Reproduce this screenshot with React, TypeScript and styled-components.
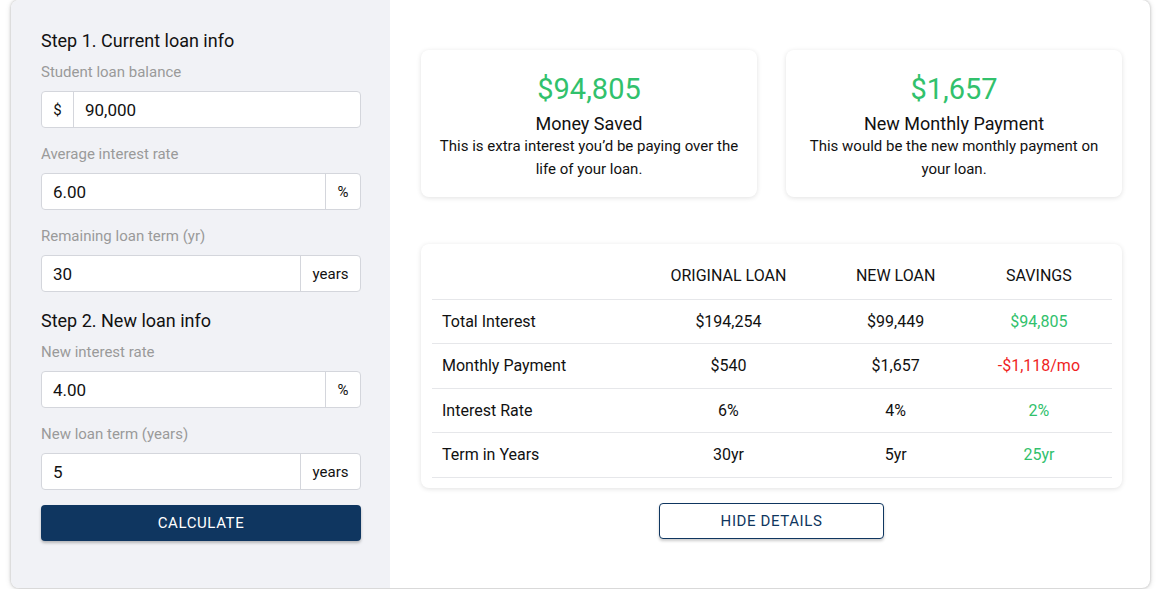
import styled, { createGlobalStyle } from "styled-components";

const GlobalStyle = createGlobalStyle`
  html, body {
    margin: 0;
    padding: 0;
    background: #ffffff;
    font-family: Roboto, "Liberation Sans", Arial, sans-serif;
    color: #111;
  }
  * { box-sizing: border-box; }
`;

type Field = { label: string; value: string; addon: string; addonSide: "left" | "right"; addonWidth: number };

const step1: Field[] = [
  { label: "Student loan balance", value: "90,000", addon: "$", addonSide: "left", addonWidth: 32 },
  { label: "Average interest rate", value: "6.00", addon: "%", addonSide: "right", addonWidth: 35 },
  { label: "Remaining loan term (yr)", value: "30", addon: "years", addonSide: "right", addonWidth: 60 },
];

const step2: Field[] = [
  { label: "New interest rate", value: "4.00", addon: "%", addonSide: "right", addonWidth: 35 },
  { label: "New loan term (years)", value: "5", addon: "years", addonSide: "right", addonWidth: 60 },
];

type Tone = "plain" | "good" | "bad";
const rows: { name: string; orig: string; next: string; diff: string; tone: Tone }[] = [
  { name: "Total Interest", orig: "$194,254", next: "$99,449", diff: "$94,805", tone: "good" },
  { name: "Monthly Payment", orig: "$540", next: "$1,657", diff: "-$1,118/mo", tone: "bad" },
  { name: "Interest Rate", orig: "6%", next: "4%", diff: "2%", tone: "good" },
  { name: "Term in Years", orig: "30yr", next: "5yr", diff: "25yr", tone: "good" },
];

function InputField({ field, first }: { field: Field; first: boolean }) {
  const addon = (
    <Addon $side={field.addonSide} $width={field.addonWidth}>
      {field.addon}
    </Addon>
  );
  return (
    <>
      <Label $first={first}>{field.label}</Label>
      <InputGroup>
        {field.addonSide === "left" && addon}
        <TextInput defaultValue={field.value} />
        {field.addonSide === "right" && addon}
      </InputGroup>
    </>
  );
}

export default function App() {
  return (
    <>
      <GlobalStyle />
      <Page>
        <Card>
          <Sidebar>
            <StepTitle>Step 1. Current loan info</StepTitle>
            {step1.map((f, i) => (
              <InputField key={f.label} field={f} first={i === 0} />
            ))}
            <StepTitle $spaced>Step 2. New loan info</StepTitle>
            {step2.map((f, i) => (
              <InputField key={f.label} field={f} first={i === 0} />
            ))}
            <CalcButton>CALCULATE</CalcButton>
          </Sidebar>

          <Results>
            <SummaryRow>
              <SummaryCard>
                <BigNumber>$94,805</BigNumber>
                <SummaryTitle>Money Saved</SummaryTitle>
                <SummaryText>This is extra interest you’d be paying over the life of your loan.</SummaryText>
              </SummaryCard>
              <SummaryCard>
                <BigNumber>$1,657</BigNumber>
                <SummaryTitle>New Monthly Payment</SummaryTitle>
                <SummaryText>This would be the new monthly payment on your loan.</SummaryText>
              </SummaryCard>
            </SummaryRow>

            <TableCard>
              <Table>
                <colgroup>
                  <col style={{ width: 199 }} />
                  <col style={{ width: 194 }} />
                  <col style={{ width: 140 }} />
                  <col style={{ width: 146 }} />
                </colgroup>
                <thead>
                  <tr>
                    <Th />
                    <Th>ORIGINAL LOAN</Th>
                    <Th>NEW LOAN</Th>
                    <Th>SAVINGS</Th>
                  </tr>
                </thead>
                <tbody>
                  {rows.map((r) => (
                    <tr key={r.name}>
                      <RowName>{r.name}</RowName>
                      <Td>{r.orig}</Td>
                      <Td>{r.next}</Td>
                      <Td $tone={r.tone}>{r.diff}</Td>
                    </tr>
                  ))}
                </tbody>
              </Table>
            </TableCard>

            <OutlineButton>HIDE DETAILS</OutlineButton>
          </Results>
        </Card>
      </Page>
    </>
  );
}

const Page = styled.div`
  padding: 0 8px 0 11px;
  height: 589px;
  overflow: hidden;
`;

const Card = styled.div`
  display: flex;
  height: 588px;
  border-radius: 8px;
  overflow: hidden;
  background: #fff;
  box-shadow: 0 0 3px rgba(0, 0, 0, 0.25), 0 1px 6px rgba(0, 0, 0, 0.12);
`;

const Sidebar = styled.div`
  width: 379px;
  flex-shrink: 0;
  background: #f1f2f6;
  padding: 29px 29px 0 30px;
  display: flex;
  flex-direction: column;
`;

const StepTitle = styled.div<{ $spaced?: boolean }>`
  font-size: 18px;
  line-height: 24px;
  color: #111;
  margin-top: ${(p) => (p.$spaced ? "17px" : "0")};
`;

const Label = styled.div<{ $first: boolean }>`
  font-size: 15px;
  line-height: 20px;
  color: #9a9a9a;
  margin-top: ${(p) => (p.$first ? "9px" : "16px")};
  margin-bottom: 9px;
`;

const InputGroup = styled.div`
  display: flex;
  height: 37px;
  width: 320px;
  background: #fff;
  border: 1px solid #d4d6dc;
  border-radius: 4px;
  overflow: hidden;
`;

const Addon = styled.div<{ $side: "left" | "right"; $width: number }>`
  width: ${(p) => p.$width}px;
  flex-shrink: 0;
  display: flex;
  align-items: center;
  justify-content: center;
  font-size: 15px;
  color: #111;
  ${(p) => (p.$side === "left" ? "border-right: 1px solid #d4d6dc;" : "border-left: 1px solid #d4d6dc;")}
`;

const TextInput = styled.input`
  flex: 1;
  min-width: 0;
  border: none;
  outline: none;
  padding: 0 11px;
  font-family: inherit;
  font-size: 17px;
  color: #111;
  background: transparent;
`;

const CalcButton = styled.button`
  margin-top: 15px;
  width: 320px;
  height: 36px;
  border: none;
  border-radius: 4px;
  background: #0f3660;
  color: #fff;
  font-family: inherit;
  font-size: 15px;
  letter-spacing: 0.6px;
  box-shadow: 0 2px 3px rgba(0, 0, 0, 0.25);
`;

const Results = styled.div`
  flex: 1;
  padding: 50px 29px 0 31px;
  display: flex;
  flex-direction: column;
  align-items: center;
`;

const SummaryRow = styled.div`
  display: grid;
  grid-template-columns: 336px 336px;
  gap: 29px;
  width: 100%;
`;

const SummaryCard = styled.div`
  height: 147px;
  border-radius: 8px;
  background: #fff;
  box-shadow: 0 1px 5px rgba(0, 0, 0, 0.12);
  padding: 20px 18px 0;
  text-align: center;
`;

const BigNumber = styled.div`
  font-size: 29px;
  line-height: 38px;
  color: #31c16c;
`;

const SummaryTitle = styled.div`
  font-size: 18px;
  line-height: 22px;
  margin-top: 5px;
  color: #111;
`;

const SummaryText = styled.div`
  font-size: 15px;
  line-height: 23px;
  color: #111;
`;

const TableCard = styled.div`
  margin-top: 47px;
  width: 100%;
  border-radius: 8px;
  background: #fff;
  box-shadow: 0 1px 5px rgba(0, 0, 0, 0.12);
  padding: 9px 10px 10px 11px;
`;

const Table = styled.table`
  width: 100%;
  border-collapse: collapse;
  table-layout: fixed;
  font-size: 16px;
`;

const Th = styled.th`
  font-weight: 400;
  font-size: 16px;
  height: 46px;
  text-align: center;
  color: #111;
  border-bottom: 1px solid #e6e7ea;
`;

const Td = styled.td<{ $tone?: Tone }>`
  height: 44.5px;
  text-align: center;
  border-bottom: 1px solid #e6e7ea;
  color: ${(p) => (p.$tone === "good" ? "#31c16c" : p.$tone === "bad" ? "#ef1f1f" : "#111")};
`;

const RowName = styled(Td)`
  text-align: left;
  padding-left: 10px;
`;

const OutlineButton = styled.button`
  margin-top: 15px;
  width: 225px;
  height: 36px;
  background: #fff;
  border: 1px solid #0f3660;
  border-radius: 4px;
  color: #0f3660;
  font-family: inherit;
  font-size: 15px;
  letter-spacing: 0.6px;
  box-shadow: 0 2px 3px rgba(0, 0, 0, 0.2);
`;
